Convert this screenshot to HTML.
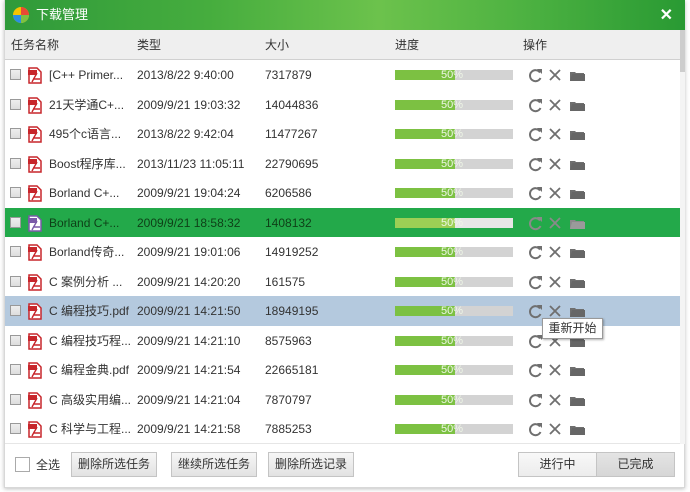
<!DOCTYPE html>
<html><head><meta charset="utf-8"><style>
*{margin:0;padding:0;box-sizing:border-box}
body{width:690px;height:492px;background:#fff;font-family:"Liberation Sans","Noto Sans CJK SC",sans-serif;font-size:12px;color:#333;position:relative;overflow:hidden}
.win{position:absolute;left:4px;top:0;width:681px;height:488px;background:#fff;border:1px solid #d8d8d8;border-top:none;box-shadow:0 1px 4px rgba(0,0,0,.25)}
.title{position:absolute;left:0;top:0;width:680px;height:30px;background:linear-gradient(90deg,#2f9a3a 0%,#46ad3e 30%,#6cc24c 55%,#4fb342 75%,#299a33 100%)}
.title .t{position:absolute;left:31px;top:7px;color:#fff;font-size:13px;line-height:16px}
.title .x{position:absolute;right:12px;top:5px;color:#fff;font-size:16px;font-weight:bold}
.hdr{position:absolute;left:0;top:30px;width:675px;height:30px;background:#efefef;border-bottom:1px solid #d0d0d0}
.hdr span{position:absolute;top:8px;color:#333;line-height:14px}
.row{position:absolute;left:0;width:675px;height:29.5px}
.row span{position:absolute;top:8px;white-space:nowrap;line-height:14px;height:14px}
.cb{position:absolute;left:5px;top:9px;width:11px;height:11px;border:1px solid #999;background:linear-gradient(#eee,#ddd)}
.pdf{position:absolute;left:22px;top:7px}
.bar{position:absolute;left:390px;top:10px;width:118px;height:10px;background:#d3d3d3}
.bar i{position:absolute;left:0;top:0;width:60px;height:10px;background:#7cc142}
.bar b{position:absolute;left:46px;top:-1px;font-weight:normal;color:#eef6e6;font-size:11px;line-height:12px}
.ops{position:absolute;left:523px;top:7px}
.sel{background:#23a94a}
.sel span{color:#0e3f17}
.hov{background:#b4c9de}
.sb{position:absolute;left:675px;top:30px;width:5px;height:414px;background:#f4f4f4}
.sb i{position:absolute;left:0;top:0;width:5px;height:42px;background:#cdcdcd}
.btn{position:absolute;top:452px;height:25px;border:1px solid #c4c4c4;background:linear-gradient(#f6f6f6,#e2e2e2);font-size:12px;text-align:center;line-height:23px;color:#333}
.tip{position:absolute;left:537px;top:318px;width:61px;height:21px;background:#fff;border:1px solid #999;font-size:12px;line-height:19px;text-align:center;box-shadow:1px 1px 2px rgba(0,0,0,.3)}
</style></head><body>
<div class="win">
<div class="title">
<svg style="position:absolute;left:6px;top:5px" width="20" height="20" viewBox="0 0 20 20"><circle cx="10" cy="10" r="8" fill="#f5c400"/><path d="M10 2a8 8 0 0 1 8 8H10z" fill="#e94b35"/><path d="M2 10a8 8 0 0 0 8 8V10z" fill="#2b8ee0"/><path d="M10 18a8 8 0 0 0 8-8h-8z" fill="#7dc242"/></svg>
<span class="t">下载管理</span><span class="x">✕</span></div>
<div class="hdr"><span style="left:6px">任务名称</span><span style="left:132px">类型</span><span style="left:260px">大小</span><span style="left:390px">进度</span><span style="left:518px">操作</span></div>
<div id="rows"></div>
<div class="sb"><i></i></div>
<div style="position:absolute;left:0;top:443px;width:675px;height:1px;background:#e6e6e6"></div>
<div style="position:absolute;left:10px;top:457px;width:15px;height:15px;border:1px solid #aaa;background:#fff"></div>
<span style="position:absolute;left:31px;top:458px;line-height:14px">全选</span>
<div class="btn" style="left:66px;width:86px">删除所选任务</div>
<div class="btn" style="left:166px;width:86px">继续所选任务</div>
<div class="btn" style="left:263px;width:86px">删除所选记录</div>
<div class="btn" style="left:513px;width:79px;background:linear-gradient(#f8f8f8,#ececec)">进行中</div>
<div class="btn" style="left:591px;width:79px;background:linear-gradient(#e4e4e4,#d6d6d6)">已完成</div>
<div class="tip">重新开始</div>
</div>
<script>
var d=[["[C++ Primer...","2013/8/22 9:40:00","7317879"],["21天学通C+...","2009/9/21 19:03:32","14044836"],["495个c语言...","2013/8/22 9:42:04","11477267"],["Boost程序库...","2013/11/23 11:05:11","22790695"],["Borland C+...","2009/9/21 19:04:24","6206586"],["Borland C+...","2009/9/21 18:58:32","1408132"],["Borland传奇...","2009/9/21 19:01:06","14919252"],["C 案例分析 ...","2009/9/21 14:20:20","161575"],["C 编程技巧.pdf","2009/9/21 14:21:50","18949195"],["C 编程技巧程...","2009/9/21 14:21:10","8575963"],["C 编程金典.pdf","2009/9/21 14:21:54","22665181"],["C 高级实用编...","2009/9/21 14:21:04","7870797"],["C 科学与工程...","2009/9/21 14:21:58","7885253"]];
var h="";
d.forEach(function(r,i){
var cls=i==5?"row sel":i==8?"row hov":"row";
var ic=i==5?"#8a8a8a":"#6f6f6f";
var pc=i==5?"#7a5aa8":"#c7262b";
h+='<div class="'+cls+'" style="top:'+(60+i*29.5)+'px"><div class="cb"></div>'+
'<svg class="pdf" width="16" height="17" viewBox="0 0 16 17"><path d="M2 1h8l4 4v11H2z" fill="#fff" stroke="'+pc+'" stroke-width="1.5"/><path d="M1 3h9v5H1z" fill="'+pc+'"/><path d="M5 15c2-4 4-7 5-9M6 12h7" stroke="'+pc+'" stroke-width="1.4" fill="none"/></svg>'+
'<span style="left:44px">'+r[0]+'</span><span style="left:132px">'+r[1]+'</span><span style="left:260px">'+r[2]+'</span>'+
'<div class="bar"'+(i==5?' style="background:#e6e6e6"':'')+'><i'+(i==5?' style="background:#9ccf55"':'')+'></i><b>50%</b></div>'+
'<svg class="ops" width="62" height="16" viewBox="0 0 62 16"><path d="M12 5.5A5.5 5.5 0 1 0 12.5 11" stroke="'+ic+'" stroke-width="2" fill="none"/><path d="M9 2l5 0 0 5z" fill="'+ic+'"/><path d="M22 3l10 10M32 3L22 13" stroke="'+ic+'" stroke-width="1.8"/><path d="M42 5h5l1 1h8v8H42z" fill="'+ic+'"/><path d="M44 7h13v7H42z" fill="'+(i==5?"#9a9a9a":"#666")+'"/></svg></div>';
});
document.getElementById("rows").innerHTML=h;
</script>
</body></html>
